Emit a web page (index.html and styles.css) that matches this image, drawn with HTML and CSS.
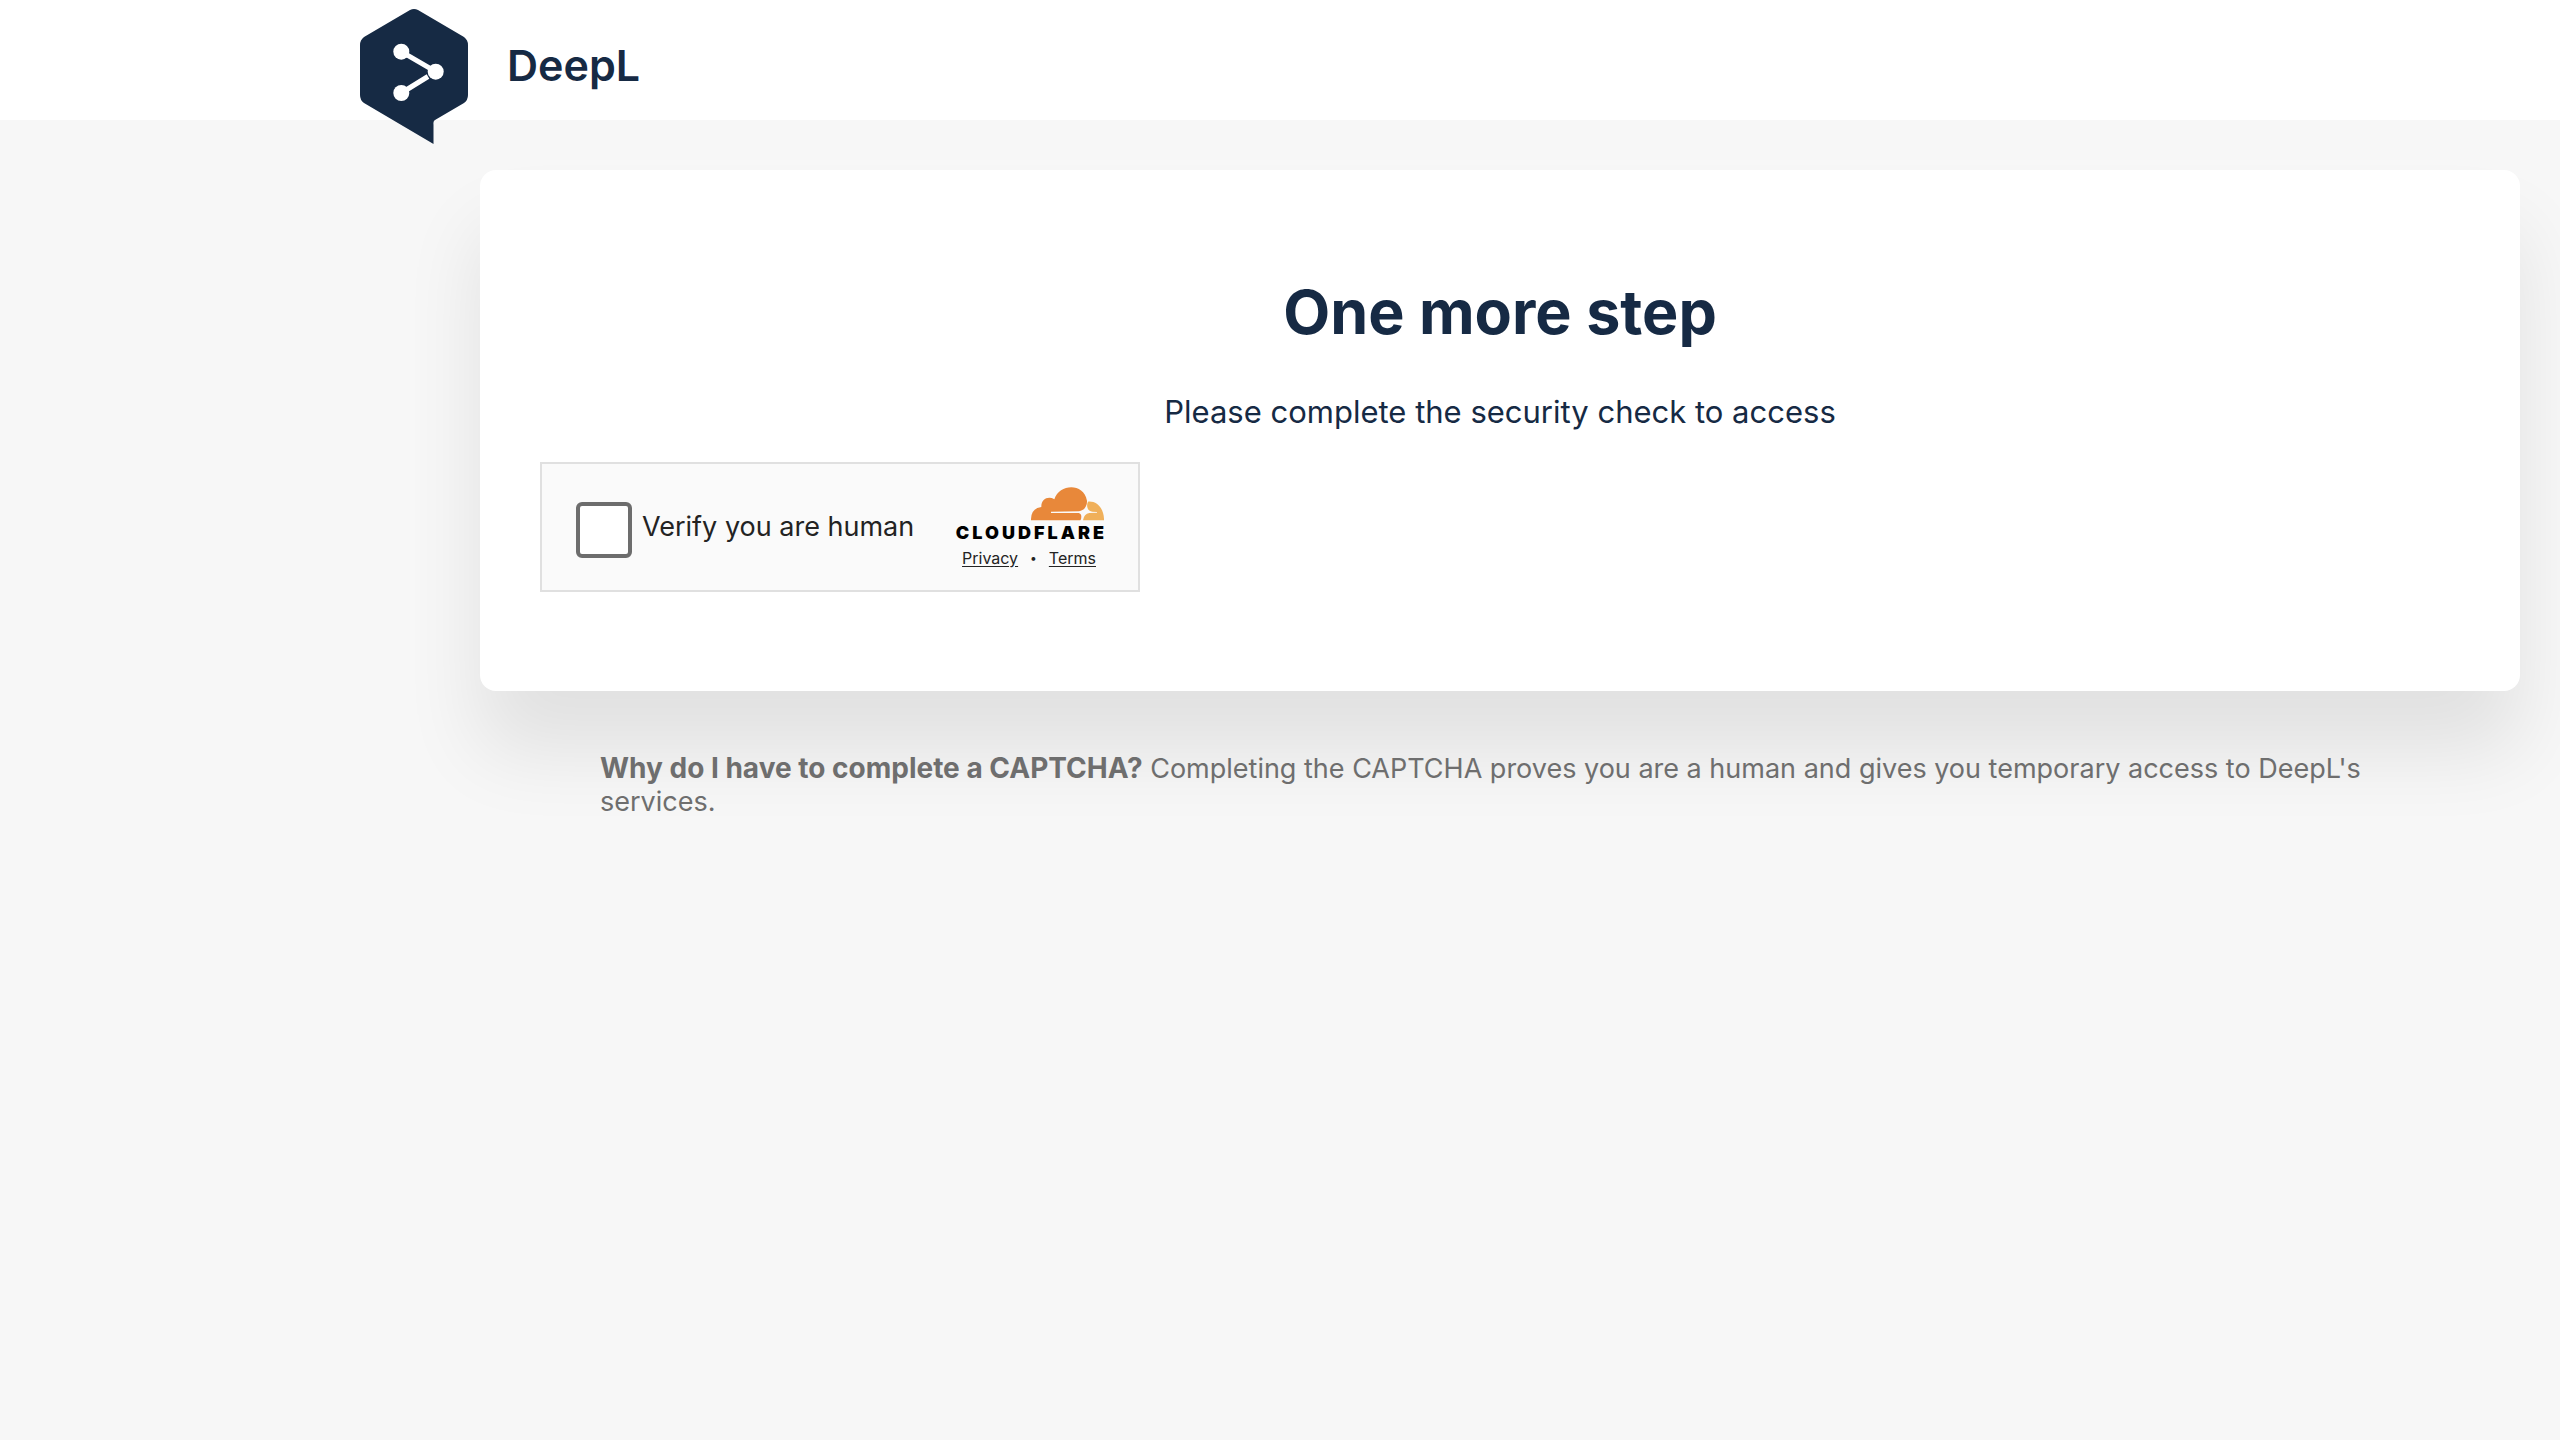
FILE: index.html
```
<!DOCTYPE html>
<html lang="en">
<head>
<meta charset="utf-8">
<title>DeepL</title>
<link rel="stylesheet" href="styles.css">
</head>
<body>
<header class="header">
  <a class="brand" href="#">
    <svg class="brand-mark" viewBox="0 0 108 136" aria-hidden="true">
      <path fill="#162a44" d="M50 2Q54 0 58 2L104 29Q108 32 108 37V87Q108 92 104 95L75 112Q73 113 73.500 117V136L4 95Q0 92 0 87V37Q0 32 4 29Z"/>
      <path stroke="#fff" stroke-width="5" fill="none" d="M41.300 43.700L75.700 63.700M68 68.500L41.300 85"/>
      <g fill="#fff"><circle cx="41.300" cy="43.700" r="8"/><circle cx="75.700" cy="63.700" r="8"/><circle cx="41.300" cy="85" r="8"/></g>
    </svg>
    <span class="brand-name">DeepL</span>
  </a>
</header>
<main class="main">
  <section class="card">
    <h1 class="title">One more step</h1>
    <p class="subtitle">Please complete the security check to access</p>
    <div class="challenge">
      <label class="verify"><input class="verify-box" type="checkbox"><span>Verify you are human</span></label>
      <div class="provider">
        <svg class="cloud" viewBox="573 110 219 102" aria-hidden="true">
          <path fill="#e8883a" d="M573 210Q572 174 604 170C603 146 625 136 643 147C658 101 730 96 741 151C742 166 734 180 717 183L633 184V188L716 188Q724 190 724 199Q724 206 721 210Z"/>
          <path fill="#f0b05a" d="M744 154C773 151 793 178 792 210H729Q732 190 748 188L771 187V185L757 184Q745 183 742 171Q740 162 744 154Z"/>
        </svg>
        <span class="wordmark">CLOUDFLARE</span>
        <div class="links"><a href="#">Privacy</a><span class="dot">•</span><a href="#">Terms</a></div>
      </div>
    </div>
  </section>
  <p class="note"><strong>Why do I have to complete a CAPTCHA?</strong> Completing the CAPTCHA proves you are a human and gives you temporary access to DeepL's services.</p>
</main>
</body>
</html>
```
FILE: styles.css
```
* { box-sizing: border-box; }
body {
  margin: 0;
  min-height: 100vh;
  background: #f7f7f7;
  color: #162a44;
  font-family: Inter, "Liberation Sans", sans-serif;
}
.header {
  height: 120px;
  padding: 8px 360px 0;
  background: #fff;
}
.brand {
  display: inline-flex;
  align-items: flex-start;
  gap: 39px;
  color: inherit;
  text-decoration: none;
}
.brand-mark { width: 108px; height: 136px; flex: none; position: relative; z-index: 1; }
.brand-name { padding-top: 32px; font-size: 43px; line-height: 50px; font-weight: 600; }
.main { padding: 50px 40px 0 480px; }
.card {
  padding: 100px 60px 99px;
  background: #fff;
  border-radius: 16px;
  box-shadow: 0 60px 80px rgba(0, 0, 0, 0.09);
}
.title { margin: 0; font-size: 61px; line-height: 84px; font-weight: 700; text-align: center; }
.subtitle { margin: 38px 0 30px; font-size: 31px; line-height: 40px; text-align: center; }
.challenge {
  display: flex;
  align-items: center;
  justify-content: space-between;
  width: 600px;
  max-width: 100%;
  height: 130px;
  padding: 0 34px;
  border: 2px solid #e0e0e0;
  background: #fafafa;
  color: #232323;
}
.verify { display: flex; align-items: center; gap: 10px; font-size: 27px; line-height: 36px; }
.verify-box {
  appearance: none;
  width: 56px;
  height: 56px;
  margin: 6px 0 0;
  border: 4px solid #6d6d6d;
  border-radius: 6px;
  background: #fff;
}
.provider { display: flex; flex-direction: column; align-items: flex-end; }
.cloud { width: 73px; height: 34px; }
.wordmark { margin: 2px -3px 0 0; color: #000; font-size: 18px; line-height: 20px; font-weight: 900; letter-spacing: 3px; }
.links { display: flex; gap: 12px; margin: 5px 8px 0 0; font-size: 16px; line-height: 20px; }
.links a { color: inherit; text-underline-offset: 2px; }
.dot { font-size: 12px; }
.note { margin: 61px 120px 0; color: #6e6e6e; font-size: 27px; line-height: 33px; }
.note strong { font-size: 28px; }
```
